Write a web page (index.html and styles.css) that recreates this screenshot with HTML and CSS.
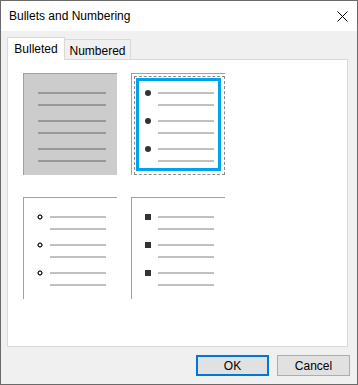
FILE: index.html
```html
<!DOCTYPE html>
<html>
<head>
<meta charset="utf-8">
<link rel="stylesheet" href="styles.css">
</head>
<body>
<div class="window">
  <div class="titlebar">
    <span class="title">Bullets and Numbering</span>
    <svg class="close" width="11" height="11" viewBox="0 0 11 11"><path d="M0.5 0.5 L10.5 10.5 M10.5 0.5 L0.5 10.5" stroke="#000" stroke-width="1" fill="none"/></svg>
  </div>
  <div class="body">
    <div class="tabs">
      <div class="tab active">Bulleted</div>
      <div class="tab">Numbered</div>
    </div>
    <div class="panel">
      <div class="grid">
        <div class="thumb plain">
          <div class="group"><div class="lines"><div class="line"></div><div class="line"></div></div></div>
          <div class="group"><div class="lines"><div class="line"></div><div class="line"></div></div></div>
          <div class="group"><div class="lines"><div class="line"></div><div class="line"></div></div></div>
        </div>
        <div class="thumb sel">
          <div class="focus">
            <div class="ring">
              <div class="group"><div class="bullet dot"></div><div class="lines"><div class="line"></div><div class="line"></div></div></div>
              <div class="group"><div class="bullet dot"></div><div class="lines"><div class="line"></div><div class="line"></div></div></div>
              <div class="group"><div class="bullet dot"></div><div class="lines"><div class="line"></div><div class="line"></div></div></div>
            </div>
          </div>
        </div>
        <div class="thumb">
          <div class="group"><div class="bullet circle"></div><div class="lines"><div class="line"></div><div class="line"></div></div></div>
          <div class="group"><div class="bullet circle"></div><div class="lines"><div class="line"></div><div class="line"></div></div></div>
          <div class="group"><div class="bullet circle"></div><div class="lines"><div class="line"></div><div class="line"></div></div></div>
        </div>
        <div class="thumb">
          <div class="group"><div class="bullet square"></div><div class="lines"><div class="line"></div><div class="line"></div></div></div>
          <div class="group"><div class="bullet square"></div><div class="lines"><div class="line"></div><div class="line"></div></div></div>
          <div class="group"><div class="bullet square"></div><div class="lines"><div class="line"></div><div class="line"></div></div></div>
        </div>
      </div>
    </div>
    <div class="buttons">
      <button class="btn default">OK</button>
      <button class="btn">Cancel</button>
    </div>
  </div>
</div>
</body>
</html>
```
FILE: styles.css
```css
html, body {
  margin: 0;
  padding: 0;
}
body {
  width: 358px;
  height: 385px;
  font-family: "Liberation Sans", Arial, sans-serif;
  font-size: 12px;
  color: #000;
}
.window {
  box-sizing: border-box;
  width: 358px;
  height: 385px;
  border: 1px solid #6a6a6a;
  background: #f0f0f0;
  display: flex;
  flex-direction: column;
}
.titlebar {
  height: 30px;
  flex: none;
  background: #fff;
  display: flex;
  align-items: center;
  justify-content: space-between;
  padding: 0 9px 0 8px;
}
.title {
  font-size: 12px;
}
.close {
  display: block;
}
.body {
  flex: 1;
  display: flex;
  flex-direction: column;
  padding: 6px 9px 8px 6px;
}
.tabs {
  display: flex;
  align-items: flex-end;
  height: 22px;
  flex: none;
}
.tab {
  box-sizing: border-box;
  height: 20px;
  width: 66px;
  border: 1px solid #d9d9d9;
  border-bottom: none;
  border-left: none;
  background: #f0f0f0;
  display: flex;
  align-items: center;
  justify-content: center;
  padding-top: 2px;
}
.tab.active {
  width: 58px;
  height: 23px;
  margin-bottom: -1px;
  border-left: 1px solid #d9d9d9;
  background: #fff;
  position: relative;
  z-index: 1;
  padding-top: 0;
}
.panel {
  box-sizing: border-box;
  height: 288px;
  flex: none;
  border: 1px solid #d9d9d9;
  background: #fff;
  padding: 13px 0 0 15px;
}
.grid {
  display: grid;
  grid-template-columns: 94px 94px;
  grid-template-rows: 102px 102px;
  column-gap: 14px;
  row-gap: 22px;
}
.thumb {
  box-sizing: border-box;
  border-top: 1px solid #a0a0a0;
  border-left: 1px solid #a0a0a0;
  padding: 18px 0 0 13px;
  display: flex;
  flex-direction: column;
  gap: 14px;
}
.thumb.plain {
  background: #cccccc;
  padding-left: 14px;
}
.group {
  display: flex;
  align-items: flex-start;
}
.lines {
  display: flex;
  flex-direction: column;
  gap: 10px;
}
.line {
  width: 56px;
  height: 2px;
  background: #c0c0c0;
}
.thumb.plain .line {
  width: 68px;
  background: #999999;
}
.bullet {
  flex: none;
  width: 6px;
  height: 6px;
  margin: -2px 7px 0 0;
}
.dot {
  border-radius: 50%;
  background: #333;
}
.square {
  background: #333;
}
.circle {
  width: 6px;
  height: 6px;
  margin: -2px 7px 0 0;
  background: radial-gradient(circle at 3px 3px, #fff 0 1.1px, #333 1.5px 2.3px, transparent 2.9px);
}
.thumb.sel {
  padding: 0;
  gap: 0;
}
.focus {
  flex: 1;
  margin: 2px 0 0 2px;
  border: 1px dashed #8a8a8a;
  display: flex;
  flex-direction: column;
}
.ring {
  flex: 1;
  margin: 1px 3px 3px 1px;
  border: 3px solid #00a2ed;
  padding: 11px 0 0 6px;
  display: flex;
  flex-direction: column;
  gap: 14px;
}
.buttons {
  display: flex;
  justify-content: flex-end;
  gap: 8px;
  margin-top: 8px;
  margin-right: -2px;
}
.btn {
  box-sizing: border-box;
  width: 73px;
  height: 21px;
  border: 1px solid #adadad;
  background: #e1e1e1;
  font-family: "Liberation Sans", Arial, sans-serif;
  font-size: 12px;
  color: #000;
  padding: 0;
  margin: 0;
}
.btn.default {
  border: 2px solid #0078d7;
}
```
